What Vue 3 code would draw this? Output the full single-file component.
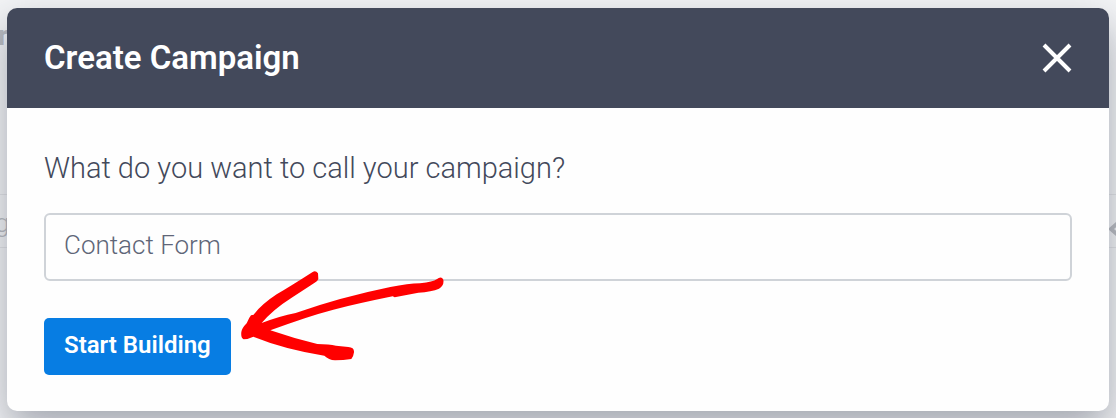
<template>
  <div class="page">
    <div class="backdrop" aria-hidden="true">
      <span class="behind behind-heading">r</span>
      <span class="behind behind-label">g</span>
      <span class="behind-row"></span>
      <svg class="behind-chevron" viewBox="0 0 14 18">
        <path d="M12 2 4 9l8 7" />
      </svg>
    </div>

    <section class="modal" role="dialog" aria-labelledby="modal-title">
      <header class="modal-header">
        <h2 id="modal-title">Create Campaign</h2>
        <button class="close" type="button" aria-label="Close">
          <svg viewBox="0 0 30 30">
            <path d="M2 2 28 28M28 2 2 28" />
          </svg>
        </button>
      </header>

      <form class="modal-body" @submit.prevent>
        <label for="campaign-name">What do you want to call your campaign?</label>
        <input id="campaign-name" v-model="name" type="text" />
        <div class="actions">
          <button class="submit" type="submit">Start Building</button>
          <svg class="arrow" viewBox="0 0 690 330" aria-hidden="true">
            <path
              d="M248 36Q257 30 264 40L265 57Q263 63 254 68L185 113Q128 149 95 189Q150 168 197 159Q330 112 481 81Q535 71 570 70Q610 66 620 58Q634 46 640 59Q643 77 627 86Q605 95 565 98L494 112L488 109Q390 129 310 149Q230 170 121 211Q190 235 262 252Q298 252 318 257L355 261Q373 262 372 277Q371 288 364 297Q340 301 315 301Q296 299 283 287Q160 267 70 230Q53 238 41 238Q32 234 34 216Q36 204 50 190Q57 173 63 166L71 164Q93 134 140 103Q181 79 248 36Z"
            />
          </svg>
        </div>
      </form>
    </section>
  </div>
</template>

<script setup>
import { ref } from "vue";

const name = ref("Contact Form");
</script>

<style>
body {
  margin: 0;
  background: #f3f4f6;
}
</style>

<style scoped>
.page {
  position: relative;
  box-sizing: border-box;
  min-height: 100vh;
  padding: 8px 7px 7px;
  overflow: hidden;
  font-family: Roboto, "Liberation Sans", sans-serif;
}

.backdrop {
  position: absolute;
  inset: 0;
  color: #b9bbc0;
}

.behind {
  position: absolute;
}

.behind-heading {
  top: 20px;
  left: -2px;
  font-size: 28px;
  line-height: 32px;
  font-weight: 700;
}

.behind-label {
  top: 208px;
  left: -5px;
  font-size: 26px;
  line-height: 30px;
  font-weight: 300;
}

.behind-row {
  position: absolute;
  top: 194px;
  right: 0;
  left: 0;
  height: 52px;
  border: solid #e2e3e6;
  border-width: 1px 0;
}

.behind-chevron {
  position: absolute;
  top: 220px;
  right: -5px;
  width: 14px;
  height: 18px;
  fill: none;
  stroke: #b9bbc0;
  stroke-width: 4;
}

.modal {
  position: relative;
  border-radius: 10px;
  background: #fefefe;
  box-shadow: 0 18px 40px rgba(67, 73, 91, 0.45);
}

.modal-header {
  display: flex;
  align-items: center;
  justify-content: space-between;
  box-sizing: border-box;
  height: 100px;
  padding: 0 37px;
  border-radius: 10px 10px 0 0;
  background: #43495b;
  color: #fff;
}

h2 {
  margin: 0;
  font-size: 33px;
  line-height: 40px;
  font-weight: 600;
}

.close {
  display: flex;
  padding: 0;
  border: 0;
  background: none;
  cursor: pointer;
}

.close svg {
  width: 30px;
  height: 30px;
  fill: none;
  stroke: #fff;
  stroke-width: 4;
}

.modal-body {
  display: flex;
  flex-direction: column;
  padding: 40px 37px 36px;
}

label {
  font-size: 29px;
  line-height: 40px;
  font-weight: 300;
  color: #43495b;
}

input {
  box-sizing: border-box;
  width: 100%;
  height: 68px;
  margin: 25px 0 37px;
  padding: 0 18px 4px;
  border: 2px solid #cfd3d8;
  border-radius: 6px;
  outline: 0;
  background: #fefefe;
  color: #5f6678;
  font-family: inherit;
  font-size: 26px;
  font-weight: 300;
}

.actions {
  position: relative;
  display: flex;
}

.submit {
  height: 57px;
  padding: 0 20px 3px;
  border: 0;
  border-radius: 5px;
  background: #077de3;
  color: #fff;
  font-family: inherit;
  font-size: 24px;
  font-weight: 600;
  cursor: pointer;
}

.arrow {
  position: absolute;
  top: -58px;
  left: 186px;
  width: 230px;
  height: 110px;
  fill: #f00;
  pointer-events: none;
}
</style>
